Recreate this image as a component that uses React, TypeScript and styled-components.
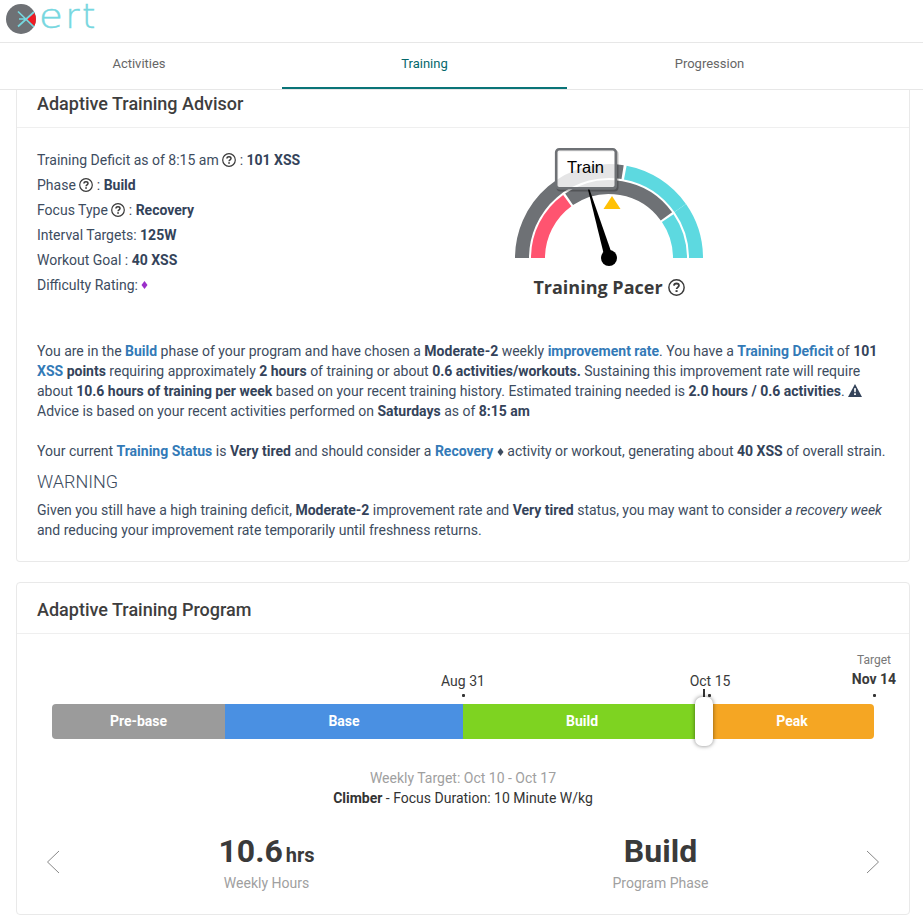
import React from "react";
import styled, { createGlobalStyle, css } from "styled-components";

const Global = createGlobalStyle`
  * { box-sizing: border-box; }
  html, body { margin: 0; background: #fff; overflow: hidden; }
  body { font: 14px/20px Roboto, "Liberation Sans", sans-serif; color: #3d4c60; }
  svg { display: block; }
`;

const Page = styled.div`
  width: 923px;
  height: 915px;
  overflow: hidden;
  display: flex;
  flex-direction: column;
`;

const Brand = styled.header`
  height: 43px;
  flex: none;
  border-bottom: 1px solid #e7e7e7;
`;

const Tabs = styled.nav`
  height: 47px;
  flex: none;
  display: grid;
  grid-template-columns: 282px 285px 285px;
  border-bottom: 1px solid #e7e7e7;
`;

const Tab = styled.a<{ $active?: boolean; $shift?: number }>`
  font-size: 13px;
  line-height: 41px;
  text-align: center;
  height: 46px;
  color: ${(p) => (p.$active ? "#05686b" : "#666")};
  padding-right: ${(p) => p.$shift ?? 0}px;
  border-bottom: 2px solid ${(p) => (p.$active ? "#0a7478" : "transparent")};
`;

const Card = styled.section<{ $continued?: boolean }>`
  margin: 0 13px 20px 16px;
  flex: none;
  border: 1px solid #e9e9e9;
  border-radius: 4px;
  height: ${(p) => (p.$continued ? 472 : 333)}px;
  ${(p) =>
    p.$continued &&
    css`
      border-top: 0;
      border-top-left-radius: 0;
      border-top-right-radius: 0;
    `}
`;

const CardTitle = styled.h2<{ $continued?: boolean }>`
  margin: 0;
  height: ${(p) => (p.$continued ? 38 : 51)}px;
  padding: ${(p) => (p.$continued ? 4 : 17)}px 20px 0;
  border-bottom: 1px solid #efefef;
  font-size: 18px;
  line-height: 20px;
  font-weight: 500;
  color: #3e3e3e;
`;

const Summary = styled.div`
  display: flex;
  height: 213px;
  padding: 20px 20px 0;
`;

const Facts = styled.ul`
  list-style: none;
  margin: 0;
  padding: 0;
  width: 463px;
`;

const Fact = styled.li`
  height: 25px;
  line-height: 25px;
  display: flex;
  align-items: center;
  white-space: pre;

  svg {
    margin-top: -1px;
  }
`;

const Pacer = styled.div`
  width: 220px;
  margin-top: -2px;
  display: flex;
  flex-direction: column;
  align-items: center;
`;

const PacerTitle = styled.div`
  display: flex;
  align-items: center;
  gap: 5px;
  height: 24px;
  margin-top: 7px;
  padding-right: 2px;
  font: 700 18px/24px "Open Sans", sans-serif;
  color: #3a3a3a;
`;

const Copy = styled.div`
  padding: 0 20px;
  white-space: nowrap;
`;

const Para = styled.p<{ $gap?: number }>`
  margin: 0 0 ${(p) => p.$gap ?? 0}px;
`;

const Strong = styled.b`
  font-weight: 700;
  color: #34435a;
`;

const Link = styled.a`
  font-weight: 700;
  color: #337ab7;
`;

const WarningTitle = styled.h3`
  margin: 0 0 8px;
  font-size: 18px;
  line-height: 20px;
  font-weight: 300;
`;

const InlineSvg = styled.svg<{ $drop?: number }>`
  display: inline-block;
  vertical-align: ${(p) => p.$drop ?? -2}px;
`;

const Purple = styled.span`
  color: #9b2fc9;
  display: flex;
`;

const Timeline = styled.div`
  width: 822px;
  margin: 17px 0 0 35px;
`;

const Labels = styled.div`
  position: relative;
  height: 53px;
  color: #3a3a3a;
`;

const Marker = styled.div<{ $x: number; $top: number }>`
  position: absolute;
  left: ${(p) => p.$x - 50}px;
  top: ${(p) => p.$top}px;
  width: 100px;
  text-align: center;
  line-height: 19px;
`;

const Small = styled.div`
  font-size: 12px;
  color: #777;
  line-height: 19px;
`;

const Dot = styled.i<{ $x: number }>`
  position: absolute;
  left: ${(p) => p.$x}px;
  top: 43px;
  width: 3px;
  height: 3px;
  border-radius: 1px;
  background: #333;
`;

const Tick = styled.i`
  position: absolute;
  left: 651px;
  top: 38px;
  width: 2px;
  height: 9px;
  background: #333;
`;

const Bar = styled.div`
  position: relative;
  display: grid;
  grid-template-columns: 173px 238px 238px 173px;
  height: 35px;
`;

const Phase = styled.div<{ $color: string; $shift?: number }>`
  background: ${(p) => p.$color};
  color: #fff;
  font-weight: 700;
  line-height: 35px;
  text-align: center;
  padding-left: ${(p) => p.$shift ?? 0}px;
  &:first-child { border-radius: 4px 0 0 4px; }
  &:nth-child(4) { border-radius: 0 4px 4px 0; }
`;

const Handle = styled.div`
  position: absolute;
  left: 643px;
  top: -7px;
  width: 18px;
  height: 49px;
  border-radius: 7px;
  background: #fff;
  box-shadow: 0 0 4px rgba(0, 0, 0, 0.5);
`;

const Target = styled.div`
  margin: 29px 0 0;
  text-align: center;
  color: #333;
`;

const Muted = styled.div`
  color: #a0a0a0;
`;

const Stats = styled.div`
  display: grid;
  grid-template-columns: 28px 1fr 1fr 28px;
  margin: 26px 23px 0;
  align-items: start;
`;

const Stat = styled.div<{ $shift?: number }>`
  text-align: center;
  padding-left: ${(p) => p.$shift ?? 0}px;
`;

const Figure = styled.div`
  font-size: 32px;
  line-height: 34px;
  height: 39px;
  font-weight: 700;
  color: #3a3a3a;
`;

const Unit = styled.span`
  font-size: 20px;
  margin-left: 3px;
`;

const Arrow = styled.svg<{ $right?: boolean }>`
  margin: 16px 0 0 ${(p) => (p.$right ? 8 : 6)}px;
`;

const Help = ({ size = 14 }: { size?: number }) => (
  <InlineSvg width={size} height={size} viewBox="0 0 14 14" fill="none">
    <circle cx="7" cy="7" r="6.3" stroke="#3a3a3a" strokeWidth="1.2" />
    <path d="M4.9 5.5C5 4.1 6 3.7 7 3.7c1.2 0 2 .7 2 1.7 0 1.5-1.9 1.5-1.9 2.9" stroke="#3a3a3a" strokeWidth="1.5" />
    <path d="M6.2 9.2h1.7v1.5H6.2z" fill="#3a3a3a" />
  </InlineSvg>
);

const Diamond = () => (
  <InlineSvg $drop={0} width="7" height="8" viewBox="0 0 7 8">
    <path d="M3.5 0 6.5 4 3.5 8 .5 4z" fill="currentColor" />
  </InlineSvg>
);

const Alert = () => (
  <InlineSvg $drop={-1} width="14" height="13" viewBox="0 0 14 13">
    <path d="M7 0 14 13H0z" fill="#34435a" />
    <path d="M6 4.3h2l-.3 4H6.3zM6.1 9.3h1.8V11H6.1z" fill="#fff" />
  </InlineSvg>
);

const Logo = () => (
  <svg width="110" height="42" viewBox="0 0 110 42">
    <circle cx="21" cy="19" r="15" fill="#6e7175" />
    <path d="M27 19 34.2 12.4A15 15 0 0 1 34.2 26z" fill="#ed1c24" />
    <path d="M18 11.5 34 27M18 26.5 34 12M19 19h8" stroke="#76d7df" strokeWidth="1.7" fill="none" />
    <g fill="#76d7df" stroke="#76d7df" strokeWidth=".5" fontFamily="DejaVu Sans" fontWeight="200" fontSize="34">
      <text transform="translate(39 28) scale(1.14 1)">e</text>
      <text x="65.5" y="28">r</text>
      <text x="82" y="28">t</text>
    </g>
  </svg>
);

const CX = 109;
const CY = 112;

const polar = (r: number, deg: number) => {
  const a = (deg * Math.PI) / 180;
  return `${(CX + r * Math.sin(a)).toFixed(2)} ${(CY - r * Math.cos(a)).toFixed(2)}`;
};

const Arc = ({ r, from, to, color }: { r: number; from: number; to: number; color: string }) => (
  <path d={`M${polar(r, from)}A${r} ${r} 0 0 1 ${polar(r, to)}`} stroke={color} strokeWidth="14" fill="none" />
);

const Gauge = () => (
  <svg width="220" height="122" viewBox="0 0 220 122">
    <Arc r={87} from={-90} to={9} color="#6e7175" />
    <Arc r={87} from={10.8} to={54.9} color="#5dd9e0" />
    <Arc r={87} from={55} to={90} color="#5dd9e0" />
    <Arc r={71} from={-90} to={-36} color="#ff5470" />
    <Arc r={71} from={-34.2} to={54} color="#6e7175" />
    <Arc r={71} from={55.8} to={90} color="#5dd9e0" />
    <path d="M112 50 120.5 63h-17z" fill="#ffc107" />
    <path d="M87.6 42h1.4L113 111l-8 2z" fill="#000" />
    <circle cx={CX} cy={CY} r="8" fill="#000" />
    <rect x="57.5" y="5" width="60" height="39.5" rx="3" fill="none" stroke="#000" strokeOpacity=".25" strokeWidth="2" />
    <rect x="56.2" y="3.2" width="59.6" height="39" rx="3" fill="#fff" fillOpacity=".82" stroke="#6e7175" strokeWidth="2.6" />
    <text x="85.5" y="27" textAnchor="middle" fontFamily="Liberation Sans" fontSize="16.5" fill="#000">Train</text>
  </svg>
);

export default function App() {
  return (
    <Page>
      <Global />
      <Brand><Logo /></Brand>
      <Tabs>
        <Tab $shift={4}>Activities</Tab>
        <Tab $active>Training</Tab>
        <Tab>Progression</Tab>
      </Tabs>
      <Card $continued>
        <CardTitle $continued>Adaptive Training Advisor</CardTitle>
        <Summary>
          <Facts>
            <Fact>Training Deficit as of 8:15 am <Help /> : <Strong>101 XSS</Strong></Fact>
            <Fact>Phase <Help /> : <Strong>Build</Strong></Fact>
            <Fact>Focus Type <Help /> : <Strong>Recovery</Strong></Fact>
            <Fact>Interval Targets: <Strong>125W</Strong></Fact>
            <Fact>Workout Goal : <Strong>40 XSS</Strong></Fact>
            <Fact>Difficulty Rating: <Purple><Diamond /></Purple></Fact>
          </Facts>
          <Pacer>
            <Gauge />
            <PacerTitle>Training Pacer <Help size={17} /></PacerTitle>
          </Pacer>
        </Summary>
        <Copy>
          <Para $gap={20}>
            You are in the <Link>Build</Link> phase of your program and have chosen a <Strong>Moderate-2</Strong> weekly <Link>improvement rate</Link>. You have a <Link>Training Deficit</Link> of <Strong>101</Strong><br />
            <Link>XSS</Link> <Strong>points</Strong> requiring approximately <Strong>2 hours</Strong> of training or about <Strong>0.6 activities/workouts.</Strong> Sustaining this improvement rate will require<br />
            about <Strong>10.6 hours of training per week</Strong> based on your recent training history. Estimated training needed is <Strong>2.0 hours / 0.6 activities</Strong>. <Alert /><br />
            Advice is based on your recent activities performed on <Strong>Saturdays</Strong> as of <Strong>8:15 am</Strong>
          </Para>
          <Para $gap={11}>
            Your current <Link>Training Status</Link> is <Strong>Very tired</Strong> and should consider a <Link>Recovery</Link> <Diamond /> activity or workout, generating about <Strong>40 XSS</Strong> of overall strain.
          </Para>
          <WarningTitle>WARNING</WarningTitle>
          <Para>
            Given you still have a high training deficit, <Strong>Moderate-2</Strong> improvement rate and <Strong>Very tired</Strong> status, you may want to consider <em>a recovery week</em><br />
            and reducing your improvement rate temporarily until freshness returns.
          </Para>
        </Copy>
      </Card>
      <Card>
        <CardTitle>Adaptive Training Program</CardTitle>
        <Timeline>
          <Labels>
            <Marker $x={411} $top={21}>Aug 31</Marker>
            <Marker $x={658} $top={21}>Oct 15</Marker>
            <Marker $x={822} $top={0}><Small>Target</Small><b>Nov 14</b></Marker>
            <Dot $x={410} />
            <Dot $x={656} />
            <Dot $x={821} />
            <Tick />
          </Labels>
          <Bar>
            <Phase $color="#9b9b9b">Pre-base</Phase>
            <Phase $color="#4a90e2">Base</Phase>
            <Phase $color="#7ed321">Build</Phase>
            <Phase $color="#f5a623" $shift={9}>Peak</Phase>
            <Handle />
          </Bar>
        </Timeline>
        <Target>
          <Muted>Weekly Target: Oct 10 - Oct 17</Muted>
          <b>Climber</b> - Focus Duration: 10 Minute W/kg
        </Target>
        <Stats>
          <Arrow width="14" height="24" viewBox="0 0 14 24" fill="none" stroke="#888"><path d="M13 1 1.5 12 13 23" /></Arrow>
          <Stat $shift={2}><Figure>10.6<Unit>hrs</Unit></Figure><Muted>Weekly Hours</Muted></Stat>
          <Stat><Figure>Build</Figure><Muted>Program Phase</Muted></Stat>
          <Arrow $right width="14" height="24" viewBox="0 0 14 24" fill="none" stroke="#888"><path d="M1 1 12.5 12 1 23" /></Arrow>
        </Stats>
      </Card>
    </Page>
  );
}
